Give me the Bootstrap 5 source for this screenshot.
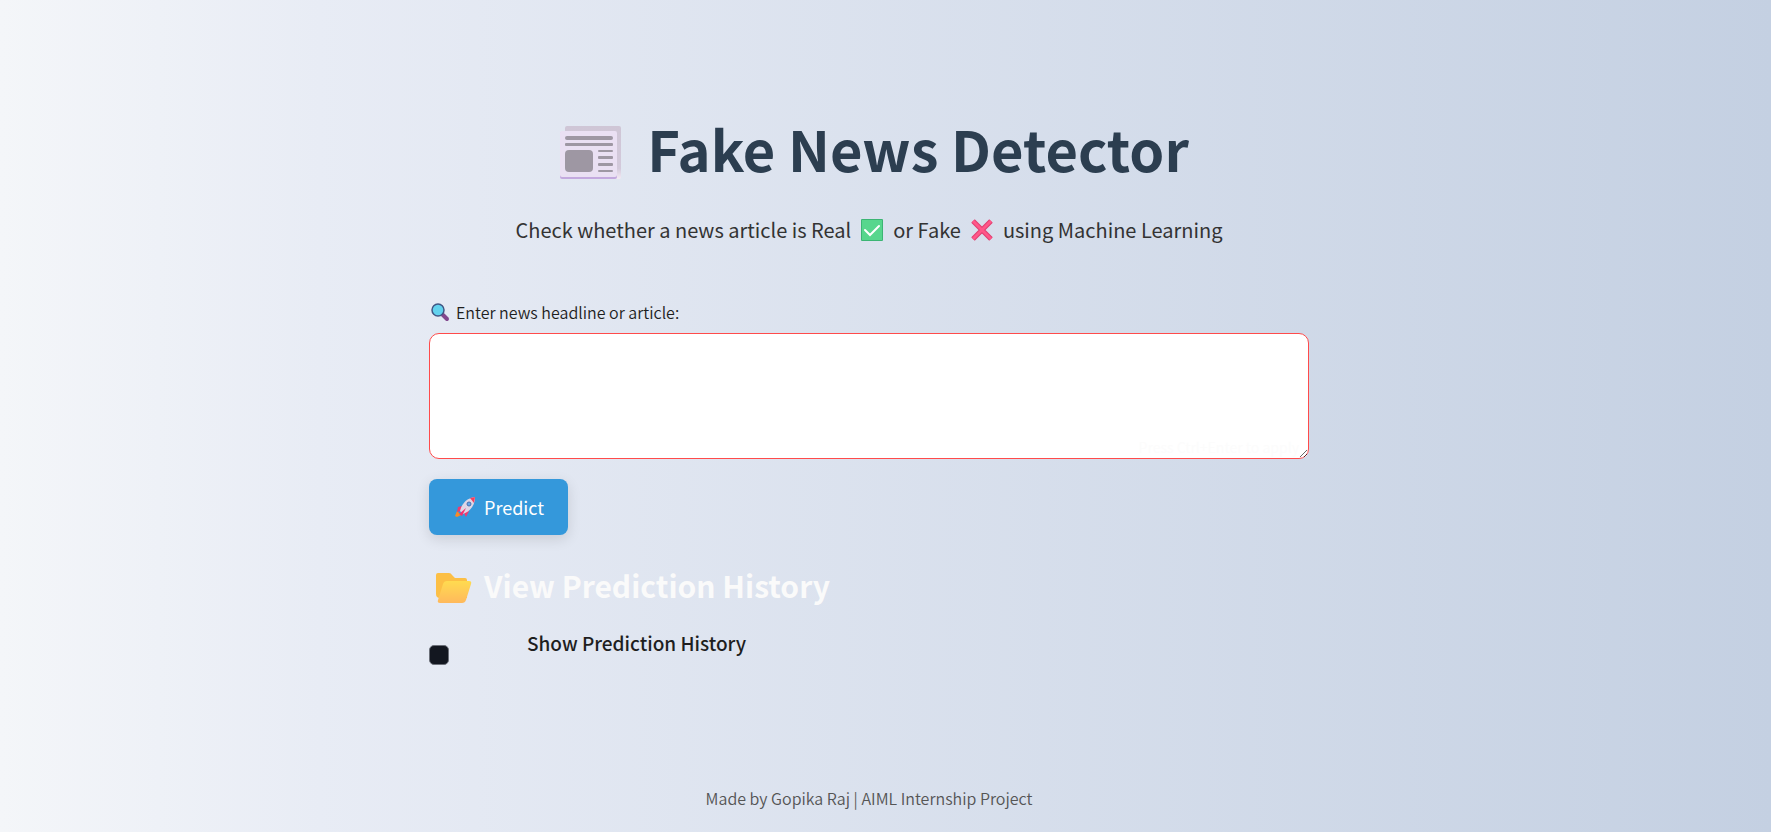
<!DOCTYPE html>
<html lang="en">
<head>
<meta charset="utf-8">
<meta name="viewport" content="width=device-width, initial-scale=1">
<title>Fake News Detector</title>
<link href="https://cdn.jsdelivr.net/npm/bootstrap@5.3.0/dist/css/bootstrap.min.css" rel="stylesheet">
<style>
  body {
    font-family: "Noto Sans CJK SC", "Open Sans", sans-serif;
    background: linear-gradient(to right, #f4f6f9, #e8ecf5 18%, #c4d0e2);
    color: #1e1e1e;
    padding-right: 33px;
  }
  .app-main { max-width: 880px; padding-top: 110px; }
  .app-title { font-size: 56px; line-height: 76px; color: #2c3e50; margin-bottom: 26px; gap: 25px; padding-left: 11px; }
  .app-title svg { margin-top: 9px; }
  .app-sub { font-size: 20px; line-height: 36px; color: #333; margin-bottom: 52px; gap: 9px; }
  .app-label { font-size: 16px; line-height: 24px; margin-bottom: 9px; gap: 6px; }
  .app-light { font-weight: 350; }
  .app-text { height: 126px; border: 1px solid #ff4b4b; border-radius: 10px; background: #fff; padding: 16px; }
  .app-text:focus { border-color: #ff4b4b; box-shadow: none; }
  .app-hint { right: 10px; bottom: 3px; font-size: 14px; line-height: 18px; color: #fcfcfc; pointer-events: none; }
  .app-btn { --bs-btn-color: #fff; --bs-btn-bg: #3498db; --bs-btn-hover-color: #fff; --bs-btn-hover-bg: #2980b9;
    --bs-btn-active-bg: #2980b9; --bs-btn-border-radius: 8px; --bs-btn-border-width: 0;
    --bs-btn-padding-x: 24px; --bs-btn-padding-y: 14px; --bs-btn-font-size: 18px; --bs-btn-line-height: 28px;
    margin-top: 20px; gap: 7px; box-shadow: 0 4px 14px rgba(0,0,0,.12); }
  .app-heading { font-size: 30px; line-height: 40px; color: #fafafa; margin-top: 30px; gap: 12px; padding-left: 7px; }
  .app-heading svg { margin-top: 5px; }
  .app-check { font-size: 19px; line-height: 28px; margin-top: 24px; }
  .app-check .form-check-input { width: 20px; height: 20px; margin: 16px 78px 0 0; background-color: #131720; border: 1px solid #6c7079; border-radius: 5px; }
  .app-foot { font-size: 16px; line-height: 24px; color: #555; padding-bottom: 22px; }
</style>
</head>
<body class="min-vh-100 d-flex flex-column">
<main class="app-main container-fluid px-0 mx-auto">
  <h1 class="app-title fw-bold d-flex justify-content-center align-items-center">
    <svg width="62" height="54" viewBox="0 0 62 54" aria-hidden="true">
      <defs><linearGradient id="fold" x2="0" y2="1"><stop stop-color="#cfc6d6"/><stop offset=".8" stop-color="#d3c9db"/><stop offset="1" stop-color="#f4eaf4"/></linearGradient></defs>
      <rect x="5" width="56" height="53" rx="2" fill="url(#fold)"/>
      <rect y="6" width="57" height="47" rx="2" fill="#c3a9de"/>
      <rect y="5" width="57" height="46" rx="2" fill="#eae0f3"/>
      <g fill="#9e97a3"><rect x="5" y="10" width="48" height="4" rx="2"/><rect x="5" y="17" width="48" height="3" rx="1"/><rect x="5" y="24" width="28" height="22" rx="4"/><rect x="38" y="24" width="15" height="2" rx="1"/><rect x="38" y="30" width="15" height="3" rx="1"/><rect x="38" y="37" width="15" height="3" rx="1"/><rect x="38" y="44" width="15" height="2" rx="1"/></g>
    </svg>
    <span>Fake News Detector</span>
  </h1>
  <p class="app-sub d-flex justify-content-center align-items-center">
    <span>Check whether a news article is Real</span>
    <svg width="24" height="24" viewBox="0 0 24 24" role="img" aria-label="check"><rect x="1" y="1" width="22" height="22" rx="1" fill="#3cb574"/><rect x="2" y="2" width="20" height="20" fill="#57d68d"/><path d="M5 12l5 5 9-9" fill="none" stroke="#fff" stroke-width="2" stroke-linecap="round"/></svg>
    <span>or Fake</span>
    <svg width="24" height="24" viewBox="0 0 24 24" role="img" aria-label="cross"><path d="M3 3l18 18M21 3L3 21" stroke="#df3d70" stroke-width="5"/><path d="M3 3l18 18M21 3L3 21" stroke="#ff5789" stroke-width="3"/></svg>
    <span>using Machine Learning</span>
  </p>
  <label for="news" class="app-label app-light d-flex align-items-center">
    <svg width="21" height="20" viewBox="0 0 21 20" aria-hidden="true"><path d="M14 13l4 4" stroke="#82478d" stroke-width="4" stroke-linecap="round"/><circle cx="9" cy="8" r="6" fill="#62d2ee" stroke="#405785" stroke-width="1.5"/></svg>
    <span>Enter news headline or article:</span>
  </label>
  <div class="position-relative">
    <textarea id="news" class="app-text form-control d-block"></textarea>
    <span class="app-hint position-absolute">Press Ctrl+Enter to apply</span>
  </div>
  <button type="button" class="app-btn btn d-inline-flex align-items-center">
    <svg width="24" height="22" viewBox="0 0 24 22" aria-hidden="true"><path d="M4 15l4 4-4 2-2-1z" fill="#f68b28"/><path d="M9 10l-4 1-1 5 4-1zM15 12l1 3-3 6-2-4z" fill="#ef3b70"/><path d="M7 15C9 7 14 2 22 1c0 8-4 14-12 17z" fill="#dfd6e5"/><path d="M17 2l5-1-1 6z" fill="#f4405f"/><circle cx="16" cy="8" r="2" fill="#63a9ea" stroke="#4b6eb0"/><path d="M6 18l7-6-4 8z" fill="#f4306d"/></svg>
    <span>Predict</span>
  </button>
  <h2 class="app-heading fw-bold d-flex align-items-center mb-0">
    <svg width="36" height="30" viewBox="0 0 36 30" aria-hidden="true"><defs><linearGradient id="front" x2="0" y2="1"><stop stop-color="#ffdb50"/><stop offset="1" stop-color="#ffb95c"/></linearGradient></defs><path d="M2 0h11q2 0 3 2l3 3h10q2 0 2 2v18H4q-4 0-4-4V2q0-2 2-2z" fill="#fcbf45"/><path d="M11 8h22q3 0 2 3l-5 16q-1 3-4 3H4q-3 0-2-3L7 11q1-3 4-3z" fill="url(#front)"/></svg>
    <span>View Prediction History</span>
  </h2>
  <div class="app-check d-flex align-items-start">
    <input class="form-check-input" type="checkbox" id="history">
    <label for="history" class="fw-medium">Show Prediction History</label>
  </div>
</main>
<footer class="app-foot app-light text-center mt-auto">Made by Gopika Raj | AIML Internship Project</footer>
<script src="https://cdn.jsdelivr.net/npm/bootstrap@5.3.0/dist/js/bootstrap.bundle.min.js"></script>
</body>
</html>
